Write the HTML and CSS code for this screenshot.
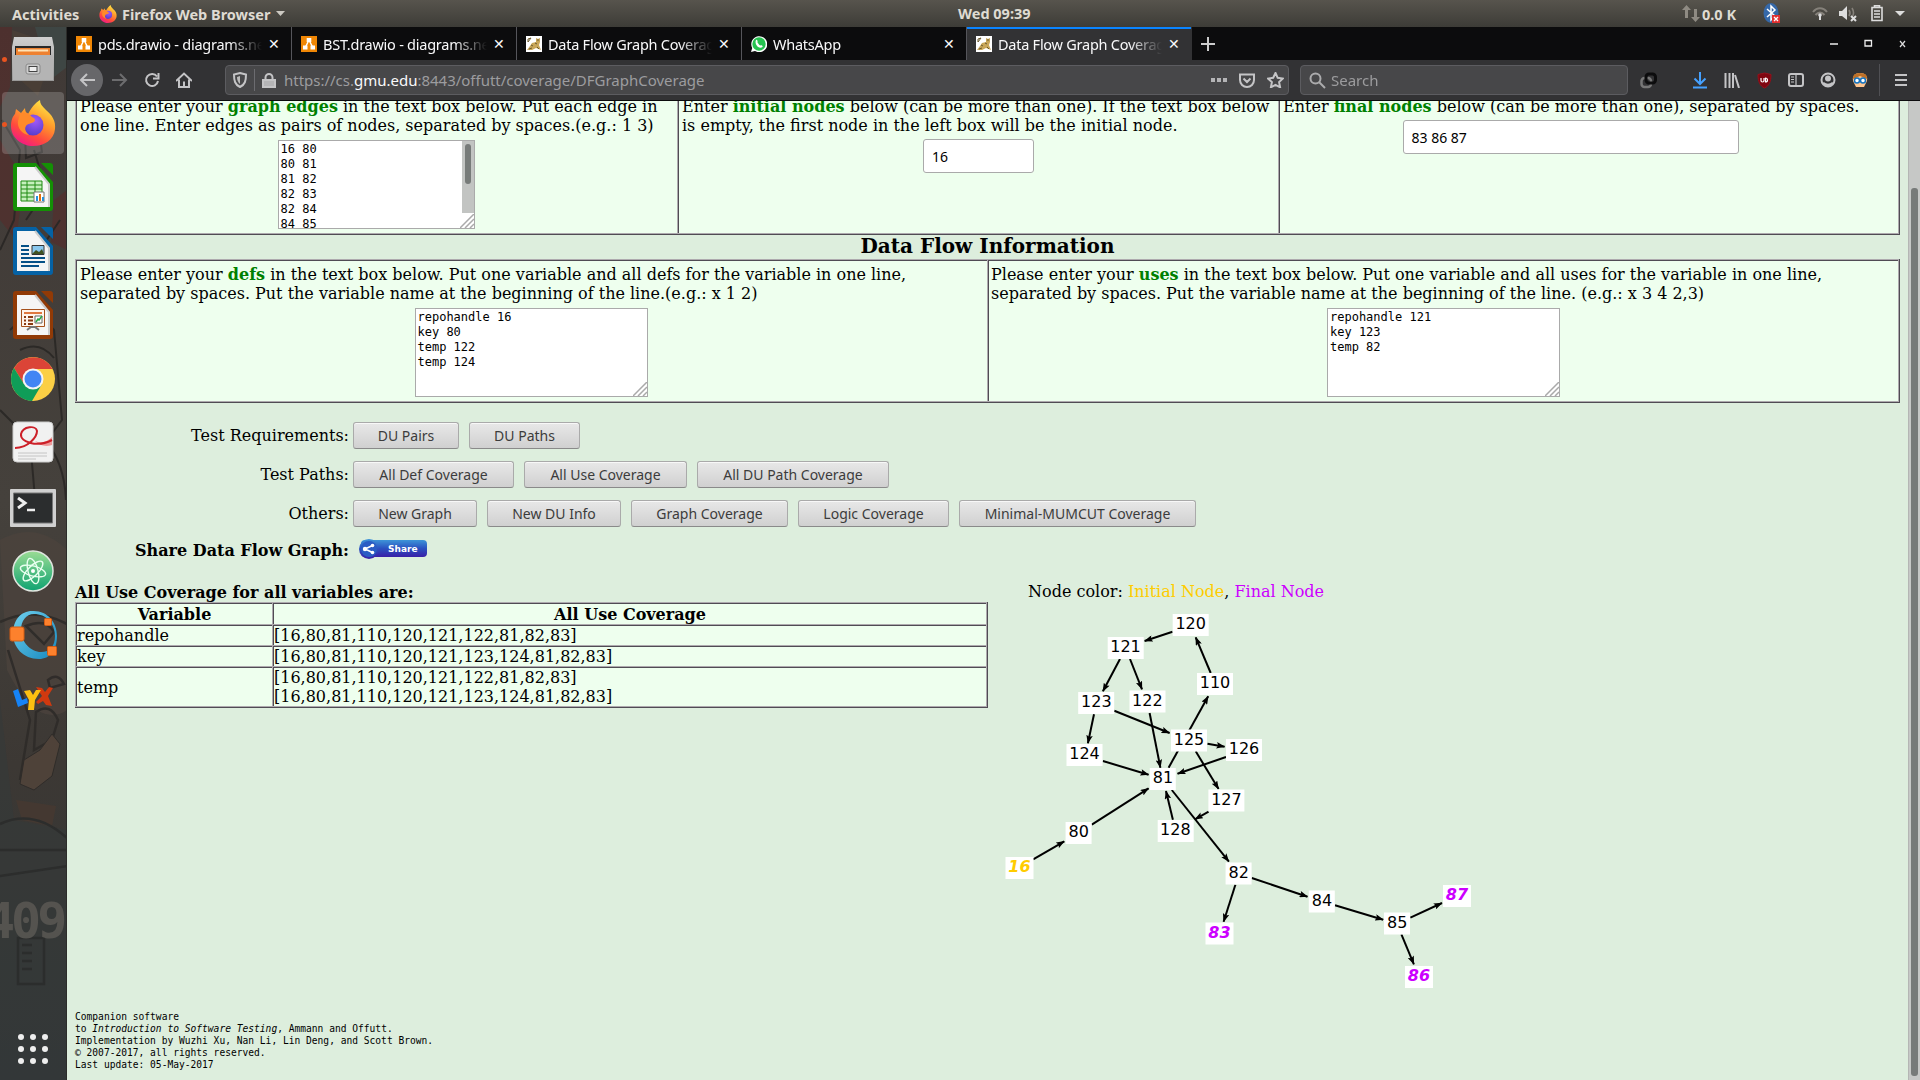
FILE: index.html
```html
<!DOCTYPE html>
<html lang="en">
<head>
<meta charset="utf-8">
<title>Data Flow Graph Coverage</title>
<link rel="stylesheet" href="styles.css">
</head>
<body>
<svg width="0" height="0" class="defs">
  <defs>
    <linearGradient id="fxA" x1=".8" y1="0" x2=".25" y2="1"><stop offset="0" stop-color="#fff04a"/><stop offset=".4" stop-color="#ff9a2b"/><stop offset=".72" stop-color="#ff4a3d"/><stop offset="1" stop-color="#f0158c"/></linearGradient>
    <radialGradient id="fxB" cx=".6" cy=".3" r=".8"><stop offset="0" stop-color="#a259f7"/><stop offset="1" stop-color="#4b3ac7"/></radialGradient>
    <linearGradient id="steel" x1="0" y1="0" x2="0" y2="1"><stop offset="0" stop-color="#d0d0d0"/><stop offset="1" stop-color="#999"/></linearGradient>
    <linearGradient id="atomG" x1="0" y1="0" x2="0" y2="1"><stop offset="0" stop-color="#9bdc94"/><stop offset="1" stop-color="#0fa371"/></linearGradient>
    <linearGradient id="ringG" x1="0" y1="0" x2="1" y2="1"><stop offset="0" stop-color="#6fd0ee"/><stop offset="1" stop-color="#1687bd"/></linearGradient>
    <linearGradient id="shareG" x1="0" y1="0" x2="0" y2="1"><stop offset="0" stop-color="#3d94d8"/><stop offset=".5" stop-color="#2a50c0"/><stop offset="1" stop-color="#3a1fa8"/></linearGradient>
    <marker id="arrow" viewBox="0 0 8 6" refX="7.500" refY="3" markerWidth="9" markerHeight="6.500" markerUnits="userSpaceOnUse" orient="auto"><path d="M0 0L8 3L0 6L1.500 3z"/></marker>
    <symbol id="firefox" viewBox="0 0 46 48">
      <path d="M30 1c0 4 2 6 6 10 6 5 10 11 9 19-1 11-11 17-22 17S1 39 1 27c0-6 2-10 4-12l1-5 5 4 4-5c0 3 1 5 3 6 4-7 7-11 12-14z" fill="url(#fxA)"/>
      <circle cx="23" cy="26" r="10.500" fill="url(#fxB)"/>
      <path d="M10 15c5-3 9-1 12 3 3 1 4 3 2 5-3 2-6 1-8 4-2 3 0 6 3 9-7-1-12-7-11-14z" fill="#ff8a2a"/>
    </symbol>
    <symbol id="drawio" viewBox="0 0 16 16"><path d="M0 0h16v16H0z" fill="#f08705"/><path d="M8 4L4 12M8 4l4 8" stroke="#fff" stroke-width="1.500"/><path d="M5.700 2h4.600v4H5.700zM2 9.500h4.500v4H2zM9.500 9.500H14v4H9.500z" fill="#fff"/></symbol>
    <symbol id="leopard" viewBox="0 0 16 16"><path d="M0 0h16v16H0z" fill="#fff"/><path d="M1 14l3-4 2-3 4-1 0-4 2 1 2-1 0 4-1 3 2 5-5-2-4 2z" fill="#c9a659"/><path d="M2 3l3-1-3 4zM5 9l2 1M9 7l2 1M11 4h2M3 13l3-1M11 11l2 2" stroke="#6b5a2e" fill="none"/></symbol>
    <symbol id="office" viewBox="0 0 40 48"><path d="M3 0h20l17 19v26a3 3 0 0 1-3 3H3a3 3 0 0 1-3-3V3a3 3 0 0 1 3-3zM28 0h9a3 3 0 0 1 3 3v9z"/><path d="M4 4h18l14 17v23H4z" fill="#f5f5f5"/><path d="M22 4l14 17v23" fill="none" stroke="#ccc" stroke-width="2"/></symbol>
  </defs>
</svg>

<header class="panel">
  <div class="panel-left">
    <span class="activities">Activities</span>
    <svg width="18" height="20"><use href="#firefox"/></svg>
    <span class="appname">Firefox Web Browser</span>
    <svg width="9" height="6"><path d="M0 0h9L4.500 5z" fill="#ccc9c2"/></svg>
  </div>
  <span class="clock">Wed 09:39</span>
  <div class="panel-right">
    <svg width="18" height="18"><path d="M4.500 0L9 5H6v8H3V5H0zM13.500 17L9 12h3V4h3v8h3z" fill="#8f8b83"/></svg>
    <span class="netspeed">0.0 K</span>
    <svg class="bt" width="18" height="21"><ellipse cx="8" cy="10" rx="7.500" ry="10" fill="#3568a8"/><path d="M4 6l8 7-4 4V3l4 4-8 7" fill="none" stroke="#fff" stroke-width="1.500"/><path d="M9 12h8v8H9z" fill="#e03131"/><path d="M11 14l4 4m0-4l-4 4" stroke="#fff" stroke-width="1.300"/></svg>
    <svg class="wifi" width="16" height="14"><path d="M1 5c4-5 10-5 14 0M3.500 8c3-3.500 6-3.500 9 0" fill="none" stroke="#85817a" stroke-width="2"/><circle cx="8" cy="8" r="1.800" fill="#ddd"/><path d="M7 9h2v4H7z" fill="#ddd"/></svg>
    <svg class="vol" width="18" height="16"><path d="M0 5h3l5-5v14L3 10H0z" fill="#ddd"/><path d="M10 4q2 3 0 6M13 2q3 5 0 9" fill="none" stroke="#85817a" stroke-width="1.600"/><path d="M12 10l5 5m0-5l-5 5" stroke="#ddd" stroke-width="2"/></svg>
    <svg class="bat" width="12" height="17"><path d="M3.500 2V.8h5V2M1 2.500h10v13H1z" fill="none" stroke="#ddd" stroke-width="1.600"/><path d="M3 6h6M3 9h6M3 12h6" stroke="#ddd" stroke-width="1.600"/></svg>
    <svg width="10" height="6"><path d="M0 0h10L5 5z" fill="#ddd"/></svg>
  </div>
</header>

<div class="desktop">
<nav class="dock">
  <svg class="wallpaper" width="67" height="1053" viewBox="0 27 67 1053">
    <path d="M35 27h32v40L50 80z" fill="#3e4b49"/><path d="M12 30l18 6 18 30-10 30-22-20z" fill="#4c4036"/><path d="M0 27h12l-2 60-10 20zM0 140l24 40-8 60-16-20zM54 200l13-10v60l-16-8z" fill="#5a2a28" opacity=".7"/>
    <path d="M24 112l14 10 4 30-16 6zM2 120l18 30-6 70-14 30M34 150l12 40-20 30M40 250l20-30M10 330q24-24 44 0l8 90-30 40M20 350q20-10 34 8M0 410l30 30 6 70M44 440q20 20 22 60" fill="none" stroke="#242220" stroke-width="2"/>
    <path d="M0 540q36-20 67 10v160q-30 20-60-40z" fill="#4c433d"/><path d="M0 622q34-16 67 2M8 650l22 70-10 60M26 626q20-8 28 6l-10 12zM48 680q10-8 16 4l-14 4zM36 712q14-10 22 8l-6 20-18 10z" fill="none" stroke="#2b2826" stroke-width="2.500"/>
    <path d="M0 700l14 120 53 10v250H0z" fill="#343a3a" opacity=".8"/><path d="M24 760l16-10 12-16 8 10-8 32-18 14-14-6z" fill="#55463b" stroke="#2b2826"/><path d="M16 800l40 6-4 20-30-6z" fill="#483930"/><path d="M0 824q34-16 67 14M0 850h67M0 876l67-10M18 938h26v46H18zM22 945h10m-10 8h10m-10 8h10m-10 8h10" fill="none" stroke="#282a2a" stroke-width="2.500"/>
    <text x="-15" y="938" class="stencil">409</text>
  </svg>
  <div class="slot running"><svg width="42" height="44" viewBox="0 0 42 44"><path d="M2 0h38l2 10v34H0V10z" fill="url(#steel)"/><path d="M3 9h36v9H3z" fill="#292929"/><path d="M4 11h34v7H4z" fill="#ee8130"/><path d="M6 13.500h30" stroke="#ffe2b5" stroke-width="2"/><path d="M1 18h40v25H1z" fill="#b4b4b4"/><rect x="14" y="27" width="14" height="10" rx="2" fill="#ccc" stroke="#8a8a8a"/><rect x="17" y="29.500" width="8" height="5" fill="#eee" stroke="#444"/></svg></div>
  <div class="slot running focused"><svg width="46" height="48"><use href="#firefox"/></svg></div>
  <div class="slot"><svg width="40" height="48"><use href="#office" fill="#149005"/><path d="M8 18h21v20H8zM8 22h21M8 26h21M8 30h21M8 34h21M14 18v20M22 18v20" fill="#c6f0bd" stroke="#1f8a12"/><path d="M21 29h10v10H21z" fill="#fff" stroke="#777"/><path d="M24 38v-5" stroke="#2592df" stroke-width="2"/><path d="M27 38v-7" stroke="#e2700f" stroke-width="2"/><path d="M30 38v-4" stroke="#2592df" stroke-width="2"/></svg></div>
  <div class="slot"><svg width="40" height="48"><use href="#office" fill="#0562a5"/><path d="M8 19h8M8 23h8M8 27h8M8 31h24M8 35h24M8 39h18" stroke="#065087" stroke-width="2"/><path d="M19 18.500h12v9H19z" fill="#8ac7ee" stroke="#333"/><path d="M19 27l4-4 3 2 3-3 2 5z" fill="#405222"/></svg></div>
  <div class="slot"><svg width="40" height="48"><use href="#office" fill="#913a06"/><path d="M8.500 18.500h23v17h-23z" fill="#fff4ec" stroke="#a5501c"/><path d="M11 22h18" stroke="#e07840" stroke-width="2"/><path d="M11 26h2m2 0h5m-9 3.500h2m2 0h5m-9 3.500h2m2 0h5" stroke="#8a3a12" stroke-width="2"/><path d="M22 25h7v7h-7z" fill="#fff" stroke="#666"/><path d="M23 31l2-3 1 1 3-4" fill="none" stroke="#28a745" stroke-width="1.500"/><path d="M14 39l4-3h4l4 3" fill="none" stroke="#777" stroke-width="2"/></svg></div>
  <div class="slot"><svg width="46" height="46" viewBox="-23 -23 46 46"><circle r="22" fill="#fbcf45"/><path d="M-19-11A22 22 0 0 1 19.500-10H0L-9 5z" fill="#db4437"/><path d="M-19-11A22 22 0 0 0-1 22L9 5-9 5z" fill="#0f9d58"/><circle r="10.500" fill="#f4f4f4"/><circle r="8.500" fill="#4285f4"/></svg></div>
  <div class="slot"><svg class="up" width="42" height="42" viewBox="0 0 42 42"><rect x="1" y="1" width="40" height="40" rx="4" fill="#f1f1f1" stroke="#ccc"/><path d="M23 20q9 4 17-4v8q-10 3-17-4" fill="#e99"/><path d="M3 27C16 27 25 16 25 10 24 4 11 5 9 13c-1 8 16 14 31 6" fill="none" stroke="#cc2029" stroke-width="2"/><path d="M6 32h29M6 35h29M6 38h18" stroke="#c4c4c4"/></svg></div>
  <div class="slot"><svg class="down" width="46" height="38" viewBox="0 0 46 38"><rect width="46" height="38" rx="1" fill="#d0d0d0"/><path d="M3.500 4h39v30h-39z" fill="#2b2d2e" stroke="#777"/><path d="M8 9l7 5-7 5" fill="none" stroke="#eee" stroke-width="3"/><path d="M17 21h8" stroke="#eee" stroke-width="2.500"/></svg></div>
  <div class="slot"><svg width="42" height="44" viewBox="-21 -22 42 44"><circle r="20" fill="url(#atomG)" stroke="#e0e6e0" stroke-width="1.500"/><g fill="none" stroke="#e9fff0" stroke-width="1.400"><ellipse rx="13" ry="5" transform="rotate(15)"/><ellipse rx="13" ry="5" transform="rotate(75)"/><ellipse rx="13" ry="5" transform="rotate(135)"/></g><circle r="2" fill="#fff"/></svg></div>
  <div class="slot"><svg width="48" height="50" viewBox="0 0 48 50"><path fill-rule="evenodd" d="M23 1C38 0 48 12 48 26S41 49 30 49C14 49 4 37 4 24 4 10 12 1 23 1zM25 4C17 4 12 11 12 20 12 32 22 42 32 42 41 42 46 36 46 26 46 13 37 4 25 4z" fill="url(#ringG)"/><g fill="#fd812d" stroke="#d55d13"><rect x="1" y="17" width="14" height="14" rx="2"/><rect x="35.500" y="8.500" width="7" height="7" rx="1"/><rect x="38.500" y="36.500" width="9" height="9" rx="1"/></g></svg></div>
  <div class="slot"><svg width="42" height="26" viewBox="0 0 42 26"><path d="M1 5l5-2 4 11 5-2 1 5-10 4z" fill="#1683f5"/><path d="M24 1l6 1 3 4 4-5 4 1-5 8 4 10-6-1-3-4-5 3-2-2 6-6z" fill="#d0390f"/><path d="M12 5l6-1 3 5 3-5h5l-6 10-1 10h-6l1-10z" fill="#fcc011"/></svg></div>
  <div class="apps"><i></i><i></i><i></i><i></i><i></i><i></i><i></i><i></i><i></i></div>
</nav>

<main class="window">
  <div class="tabs">
    <div class="tab"><svg width="16" height="16"><use href="#drawio"/></svg><span>pds.drawio - diagrams.net</span><b>✕</b></div>
    <div class="tab"><svg width="16" height="16"><use href="#drawio"/></svg><span>BST.drawio - diagrams.net</span><b>✕</b></div>
    <div class="tab"><svg width="16" height="16"><use href="#leopard"/></svg><span>Data Flow Graph Coverage</span><b>✕</b></div>
    <div class="tab"><svg width="16" height="16" viewBox="0 0 16 16"><path d="M0 16l1.200-4A8 8 0 1 1 4 15z" fill="#fff"/><circle cx="8" cy="8" r="6.700" fill="#25c350"/><path d="M5 4c1-1 2 1 1.500 2.500Q8 9 9.500 9.500C11 8.500 12 10 11.500 11 8 14 3 8 5 4z" fill="#fff"/></svg><span>WhatsApp</span><b>✕</b></div>
    <div class="tab active"><svg width="16" height="16"><use href="#leopard"/></svg><span>Data Flow Graph Coverage</span><b>✕</b></div>
    <svg class="plus" width="14" height="14"><path d="M7 0v14M0 7h14" stroke="#ccc" stroke-width="2"/></svg>
    <svg class="controls" width="78" height="10"><path d="M0 5h8" stroke="#eee" stroke-width="1.500"/><path d="M35 1.500h6.500v5.500H35z" fill="none" stroke="#eee" stroke-width="1.300"/><path d="M70 2l5 6m0-6l-5 6" stroke="#ddd" stroke-width="1.200"/></svg>
  </div>

  <div class="toolbar">
    <span class="back"><svg width="16" height="14"><path d="M8 1L2 7l6 6M2 7h14" /></svg></span>
    <span class="tool dim"><svg width="16" height="14"><path d="M8 1l6 6-6 6M14 7H0"/></svg></span>
    <span class="tool"><svg width="16" height="16"><path d="M13 4.500A6 6 0 1 0 14 9M14.500 1v5.500H9"/></svg></span>
    <span class="tool"><svg width="16" height="16"><path d="M0 9L8 1.500 16 9M3 7.500V15h10V7.500M8 9.500v5"/></svg></span>
    <div class="url">
      <svg class="shield" width="14" height="16"><path d="M7 1l6 1.500C13 9 12 12.500 7 15 2 12.500 1 9 1 2.500z"/><path d="M7 4v8c-2-1.500-3-4-3-7z" fill="#bbb" stroke="none"/></svg>
      <i class="sep"></i>
      <svg width="14" height="15"><path d="M3.500 7V4.500a3.500 3.500 0 0 1 7 0V7"/><path d="M1 7h12v7H1z" fill="#b4b4b6"/></svg>
      <span class="address">https://cs.<em>gmu.edu</em>:8443/offutt/coverage/DFGraphCoverage</span>
      <svg class="dots" width="16" height="4"><path d="M0 0h4v4H0zM6 0h4v4H6zM12 0h4v4h-4z" fill="#b4b4b6" stroke="none"/></svg>
      <svg width="16" height="15"><path d="M1 1.500h14V7A7 7 0 0 1 1 7zM4.500 5.500L8 9l3.500-3.500"/></svg>
      <svg width="17" height="16"><path d="M8.500 1l2.200 4.800 5.200.7-3.800 3.600 1 5.200-4.600-2.500-4.600 2.500 1-5.200L1 6.500l5.200-.7z"/></svg>
    </div>
    <div class="search"><svg width="17" height="17"><circle cx="6.500" cy="6.500" r="5"/><path d="M10 10l6 6"/></svg><span>Search</span></div>
    <div class="addons">
      <span class="tool loops"><svg width="17" height="17"><rect x="1.500" y="6" width="9.500" height="9" rx="3" stroke="#777" stroke-width="2.500"/><rect x="6" y="2" width="9.500" height="9" rx="3" stroke="#0c0c0d" stroke-width="3"/></svg></span>
      <span class="tool"><svg width="14" height="17"><path d="M7 0v11M1.500 6.500L7 12l5.500-5.500M0 15.500h14" stroke="#45a1ff"/></svg></span>
      <span class="tool"><svg width="16" height="15"><path d="M1.500 0v15M5.500 0v15M9 0v15M11 2l4 13" /></svg></span>
      <span class="tool"><svg width="15" height="17"><path d="M7.500 1L14 2.500C14 10 12 14 7.500 16 3 14 1 10 1 2.500z" fill="#800610" stroke="#95101a" stroke-width="1"/><path d="M4 6v2.500a1.300 1.300 0 0 0 3 0V6M8.500 6v4a2 2 0 0 0 0-4z" stroke="#fff" stroke-width="1.200"/></svg></span>
      <span class="tool"><svg width="16" height="14"><rect x="1" y="1" width="14" height="12" rx="2"/><path d="M8 1v12M3 4h3M3 6.500h3M3 9h3" stroke-width="1.200"/></svg></span>
      <span class="tool"><svg width="16" height="16"><circle cx="8" cy="8" r="6.500"/><circle cx="8" cy="6.500" r="3" fill="#c4c4c6" stroke="none"/><path d="M3 11q5 4 10 0" stroke-width="2.500"/></svg></span>
      <span class="tool"><svg width="16" height="16"><path d="M1 9Q0 1 8 1t7 8l-3 6H4z" fill="#ffc58f" stroke="none"/><path d="M1 7Q0 1 8 1t7 6L8 4z" fill="#bd7028" stroke="none"/><circle cx="5" cy="8.500" r="2.500" fill="#fff" stroke="#1473c0" stroke-width="1.500"/><circle cx="11" cy="8.500" r="2.500" fill="#fff" stroke="#1473c0" stroke-width="1.500"/></svg></span>
      <span class="menu"><svg width="12" height="14"><path d="M0 2h12M0 7h12M0 12h12"/></svg></span>
    </div>
  </div>

  <div class="view">
    <div class="page">
      <section class="grid inputs">
        <div class="cell"><p>Please enter your <strong>graph edges</strong> in the text box below. Put each edge in one line. Enter edges as pairs of nodes, separated by spaces.(e.g.: 1 3)</p>
          <div class="area edges"><pre>16 80
80 81
81 82
82 83
82 84
84 85</pre><div class="bar"><i></i></div><svg class="grip" width="14" height="14"><path d="M0 14L14 0M5 14l9-9M10 14l4-4" stroke="#aaa" stroke-width="1.500"/></svg></div></div>
        <div class="cell"><p>Enter <strong>initial nodes</strong> below (can be more than one). If the text box below is empty, the first node in the left box will be the initial node.</p><div class="field short">16</div></div>
        <div class="cell"><p>Enter <strong>final nodes</strong> below (can be more than one), separated by spaces.</p><div class="field long">83 86 87</div></div>
      </section>
      <h3>Data Flow Information</h3>
      <section class="grid flow">
        <div class="cell"><p>Please enter your <strong>defs</strong> in the text box below. Put one variable and all defs for the variable in one line,<br>separated by spaces. Put the variable name at the beginning of the line.(e.g.: x 1 2)</p>
          <div class="area"><pre>repohandle 16
key 80
temp 122
temp 124</pre><svg class="grip" width="14" height="14"><path d="M0 14L14 0M5 14l9-9M10 14l4-4" stroke="#aaa" stroke-width="1.500"/></svg></div></div>
        <div class="cell"><p>Please enter your <strong>uses</strong> in the text box below. Put one variable and all uses for the variable in one line,<br>separated by spaces. Put the variable name at the beginning of the line. (e.g.: x 3 4 2,3)</p>
          <div class="area"><pre>repohandle 121
key 123
temp 82</pre><svg class="grip" width="14" height="14"><path d="M0 14L14 0M5 14l9-9M10 14l4-4" stroke="#aaa" stroke-width="1.500"/></svg></div></div>
      </section>

      <section class="actions">
        <div class="row"><label>Test Requirements:</label><button style="width:106px">DU Pairs</button><button style="width:111px">DU Paths</button></div>
        <div class="row"><label>Test Paths:</label><button style="width:161px">All Def Coverage</button><button style="width:163px">All Use Coverage</button><button style="width:192px">All DU Path Coverage</button></div>
        <div class="row"><label>Others:</label><button style="width:124px">New Graph</button><button style="width:134px">New DU Info</button><button style="width:157px">Graph Coverage</button><button style="width:151px">Logic Coverage</button><button style="width:237px">Minimal-MUMCUT Coverage</button></div>
        <div class="row share"><label>Share Data Flow Graph:</label><svg width="71" height="20"><rect x="4" y="1" width="66" height="17" rx="4" fill="url(#shareG)"/><circle cx="12" cy="10" r="10" fill="url(#shareG)"/><circle cx="12" cy="10" r="8" fill="#2a5cc4"/><path d="M15.500 6.500L8 10l7.500 3.500" fill="none" stroke="#fff" stroke-width="1.500"/><g fill="#fff"><circle cx="15.500" cy="6.500" r="1.800"/><circle cx="8" cy="10" r="2.200"/><circle cx="15.500" cy="13.500" r="1.800"/></g><text x="31" y="13" class="sharetext">Share</text></svg></div>
      </section>

      <section class="results">
        <div class="coverage">
          <h4>All Use Coverage for all variables are:</h4>
          <div class="grid table">
            <div class="cell th">Variable</div><div class="cell th">All Use Coverage</div>
            <div class="cell">repohandle</div><div class="cell">[16,80,81,110,120,121,122,81,82,83]</div>
            <div class="cell">key</div><div class="cell">[16,80,81,110,120,121,123,124,81,82,83]</div>
            <div class="cell">temp</div><div class="cell">[16,80,81,110,120,121,122,81,82,83]<br>[16,80,81,110,120,121,123,124,81,82,83]</div>
          </div>
        </div>
        <div class="graph">
          <p>Node color: <span class="initial">Initial Node</span>, <span class="final">Final Node</span></p>
          <svg width="480" height="390" viewBox="40 22 480 390">
            <g class="edge">
              <path d="M212.500 51.700L184.600 61"/><path d="M160 79L142.900 111.300"/><path d="M170 79L182 109.300"/><path d="M250.700 93L235.700 57.300"/><path d="M154.300 130.700L209.600 153"/><path d="M134 134.300L127.900 163.300"/><path d="M189.600 133L200.400 187.700"/><path d="M142.900 181L188.600 194.700"/><path d="M208.600 187.700L248.200 116.300"/><path d="M247.500 163.700L264.600 166.700"/><path d="M266 177L217.500 193.700"/><path d="M235.700 171.300L258.600 209"/><path d="M248.600 231.700L235 239.300"/><path d="M212.900 239.700L206 211"/><path d="M131.800 244.700L188.600 208.300"/><path d="M73.200 279.300L104.300 261.300"/><path d="M211.800 210L268.900 281.700"/><path d="M291.800 298L347.500 316.700"/><path d="M275.400 304.700L263.600 341.700"/><path d="M375 325.300L423.200 339.700"/><path d="M450.400 337.700L482 323"/><path d="M441.400 354.300L453.900 384.300"/>
            </g>
            <g class="box">
              <path d="M212.700 34h36v22h-36zM147.700 57h36v22h-36zM237 93h36v22h-36zM118.200 112h36v22h-36zM169.500 110.500h36v22h-36zM211 149.500h36v22h-36zM266 159h36v22h-36zM106.500 164h36v22h-36zM189.800 188h26v22h-26zM248.400 209.500h36v22h-36zM197.700 240h36v22h-36zM105.600 242h26v22h-26zM45.500 277h28v22h-28zM265.600 282.500h26v22h-26zM348.800 310.500h26v22h-26zM245.500 342.500h28v22h-28zM424 332.500h26v22h-26zM483 305h28v22h-28zM445 386h28v22h-28z"/>
            </g>
            <g class="node">
              <text x="230.700" y="49">120</text><text x="165.500" y="72">121</text><text x="255" y="108">110</text><text x="136.300" y="127">123</text><text x="187.300" y="126">122</text><text x="229" y="165">125</text><text x="284" y="174">126</text><text x="124.500" y="179">124</text><text x="203" y="203">81</text><text x="266.400" y="225">127</text><text x="215.300" y="255">128</text><text x="118.700" y="257">80</text><text x="278.800" y="298">82</text><text x="362" y="326">84</text><text x="437.200" y="348">85</text>
              <g class="strong"><text x="59.500" y="292" fill="#fc0">16</text><text x="259.500" y="358" fill="#c0f">83</text><text x="497" y="320" fill="#c0f">87</text><text x="459" y="401" fill="#c0f">86</text></g>
            </g>
          </svg>
        </div>
      </section>
      <footer>Companion software<br>to <em>Introduction to Software Testing</em>, Ammann and Offutt.<br>Implementation by Wuzhi Xu, Nan Li, Lin Deng, and Scott Brown.<br>© 2007-2017, all rights reserved.<br>Last update: 05-May-2017</footer>
    </div>
    <div class="scroll"><i></i></div>
  </div>
</main>
</div>
</body>
</html>
```
FILE: styles.css
```css
* { box-sizing: border-box; }
body { margin: 0; width: 1920px; height: 1080px; overflow: hidden; display: flex; flex-direction: column; font-family: "DejaVu Serif", serif; font-size: 16px; color: #000; }
p, h3, h4, pre { margin: 0; }
svg { display: block; flex: none; }
.defs { position: absolute; }

.panel { height: 27px; flex: none; display: grid; grid-template-columns: 958px auto 1fr; align-items: center; background: linear-gradient(#57544d, #3d3c37); color: #dfdbd2; font: 700 14.500px/20px "Noto Sans", sans-serif; white-space: nowrap; }
.panel-left, .panel-right { display: flex; align-items: center; }
.activities { width: 68px; margin: 0 19px 0 12px; }
.appname { width: 150px; margin: 0 4px 0 5px; }
.panel-right { justify-content: flex-end; padding-right: 15px; }
.netspeed { width: 36px; margin: 0 25px 0 2px; }
.clock { margin-top: -2px; }
.bt { margin-right: 31px; }
.wifi { margin-right: 11px; }
.vol { margin-right: 14px; }
.bat { margin-right: 12px; }

.desktop { flex: 1; display: flex; min-height: 0; }
.dock { width: 67px; flex: none; position: relative; display: flex; flex-direction: column; background: linear-gradient(#403936, #45413c 45%, #3c3834 70%, #313536); border-right: 1px solid #2c2c2a; overflow: hidden; }
.wallpaper { position: absolute; left: 0; top: 0; opacity: .75; }
.stencil { font: 700 50px/1 "DejaVu Sans Mono", monospace; fill: #5f5d58; letter-spacing: -4px; }
.slot { position: relative; height: 64px; flex: none; display: grid; place-items: center; }
.slot svg { position: relative; }
.slot .up { margin-top: -3px; }
.slot .down { margin-top: 2px; }
.focused { margin: 1px 2px 1px 2px; height: 62px; background: rgba(255,255,255,.19); border-radius: 4px; }
.running::before { content: ""; position: absolute; left: 2px; top: 30px; width: 5px; height: 5px; border-radius: 50%; background: #e95420; }
.focused::before { left: 0; }
.apps { position: relative; margin: auto 0 16px 18px; display: grid; grid-template-columns: repeat(3, 6px); gap: 6px; }
.apps i { width: 6px; height: 6px; border-radius: 50%; background: #eee; }

.window { flex: 1; min-width: 0; display: flex; flex-direction: column; font-size: 16px; }
.tabs { height: 33px; flex: none; display: flex; align-items: center; background: #0c0c0d; color: #f9f9fa; font: 14.500px/20px "Noto Sans", sans-serif; }
.tab { width: 225px; height: 33px; padding: 0 11px 0 9px; display: flex; align-items: center; gap: 6px; border-right: 1px solid #55555a; }
.tab span { flex: 1; min-width: 0; overflow: hidden; white-space: nowrap; letter-spacing: -.25px; -webkit-mask: linear-gradient(90deg, #000 80%, transparent); mask: linear-gradient(90deg, #000 80%, transparent); }
.tab b { width: 12px; font: 14px/14px "DejaVu Sans", sans-serif; }
.active { background: #323234; box-shadow: inset 0 2px #0a84ff; border-right-color: #323234; }
.plus { margin-left: 9px; }
.controls { margin-left: auto; margin-right: 12px; }

.toolbar { height: 41px; flex: none; display: flex; align-items: center; background: #323234; border-bottom: 1px solid #0c0c0d; font: 15px/20px "Noto Sans", sans-serif; color: #b1b1b3; }
.toolbar svg { fill: none; stroke: #c4c4c6; stroke-width: 2; }
.tool { width: 32px; display: grid; place-items: center; }
.dim { opacity: .4; }
.back { width: 32px; height: 32px; margin: 0 1px 0 4px; border-radius: 50%; background: #67676a; display: grid; place-items: center; }
.url, .search { height: 30px; display: flex; align-items: center; background: #474749; border: 1px solid #5c5c60; border-radius: 4px; }
.url { width: 1064px; margin-left: 25px; padding: 0 4px 0 7px; }
.sep { width: 1px; height: 22px; margin: 0 7px; background: #6c6c70; }
.address { flex: 1; margin-left: 8px; letter-spacing: -.01px; color: #9c9c9f; }
.address em { font-style: normal; color: #f9f9fa; }
.url .dots { margin-right: 12px; }
.url .dots + svg { margin-right: 12px; }
.search { width: 328px; margin-left: 11px; padding-left: 8px; gap: 5px; }
.search svg, .search span { opacity: .8; }
.addons { display: flex; align-items: center; height: 40px; margin-left: 4px; }
.loops { margin-right: 20px; }
.menu { height: 32px; margin-left: 3px; padding-left: 15px; border-left: 1px solid #505054; display: grid; place-items: center; }

.view { flex: 1; min-height: 0; display: flex; overflow: hidden; background: #ddeedd; }
.page { width: 1841px; padding-left: 8px; height: 979px; overflow: hidden; }
.scroll { width: 12px; background: #c6c8c6; border-left: 1px solid #b4b6b4; padding: 87px 2px 4px; }
.scroll i { display: block; height: 100%; border-radius: 3px; background: #777b79; }
strong { color: #008000; }
.grid { display: grid; gap: 2px; padding: 2px; background: #aeaaae; box-shadow: inset -1px -1px #504c54; }
.cell { background: #eeffee; min-width: 0; line-height: 19px; box-shadow: 0 -1px #504c54, -1px 0 #504c54, -1px -1px #504c54; }
.inputs { width: 1825px; height: 134px; padding-top: 0; grid-template-columns: 600px 599px 1fr; white-space: nowrap; }
.inputs .cell { padding: 0 3px; display: flex; flex-direction: column; align-items: center; }
.inputs p { width: 100%; margin-top: -4px; white-space: normal; }
.area { position: relative; width: 233px; height: 89px; border: 1px solid #aaa; background: #fff; }
.area pre { font: 12px/15px "DejaVu Sans Mono", monospace; padding: 1px 2px; height: 87px; overflow: hidden; }
.edges { width: 197px; margin-top: 5px; margin-right: 2px; flex: none; }
.bar { position: absolute; right: 0; top: 0; width: 12px; height: 72px; background: #c2c4c2; padding: 3px; }
.bar i { display: block; width: 6px; height: 40px; border-radius: 3px; background: #777b79; }
.grip { position: absolute; right: 0; bottom: 0; }
.field { height: 34px; flex: none; margin-top: 4px; border: 1px solid #aaa; border-radius: 3px; background: #fff; font: 14px/34px "Noto Sans", sans-serif; padding-left: 8px; }
.short { width: 111px; }
.long { width: 336px; margin-right: 37px; }
h3 { width: 1825px; height: 24px; font-size: 20px; line-height: 23px; text-align: center; }
.flow { width: 1825px; height: 144px; grid-template-columns: 910px 1fr; }
.flow .cell { padding: 4px 2px 0; display: flex; flex-direction: column; align-items: center; }
.flow .cell:first-child { padding-left: 3px; }
.flow .cell:first-child .area { margin-right: 3px; }
.flow p { width: 100%; white-space: nowrap; }
.flow .area { margin-top: 5px; }
.actions { margin-top: 19px; display: flex; flex-direction: column; gap: 12px; }
.row { height: 27px; display: flex; align-items: center; gap: 10px; }
.row label { width: 274px; margin-right: -6px; text-align: right; white-space: nowrap; }
.row button { height: 27px; padding: 0; border: 1px solid #aaa; border-bottom-color: #8a8a8a; border-radius: 3px; background: linear-gradient(#e8e8e8, #d0d0d0); box-shadow: inset 0 1px #f8f8f8; font: 14px/20px "Noto Sans", sans-serif; color: #3c3c3c; }
.share { height: 20px; }
.share label { font-weight: 700; margin-right: -2px; padding-top: 3px; }
.sharetext { font: 700 9px "DejaVu Sans", sans-serif; fill: #fff; }
.results { margin-top: 23px; display: flex; height: 408px; }
.coverage { width: 913px; }
h4 { font-size: 16px; line-height: 22px; height: 20px; }
.table { grid-template-columns: 195px 1fr; grid-template-rows: 20px 19px 19px 38px; }
.table .cell { display: flex; align-items: center; }
.table .th { justify-content: center; font-weight: 700; }
.graph { padding-left: 12px; }
.graph p { line-height: 20px; padding-left: 28px; }
.initial { color: #fc0; }
.final { color: #c0f; }
.edge path { stroke: #000; stroke-width: 2; marker-end: url(#arrow); }
.box { fill: #fff; }
.node { font: 16px "DejaVu Sans", sans-serif; text-anchor: middle; }
.strong { font-weight: 700; font-style: oblique; }
footer { margin-top: 21px; font: 9.600px/12px "DejaVu Sans Mono", monospace; }
```
